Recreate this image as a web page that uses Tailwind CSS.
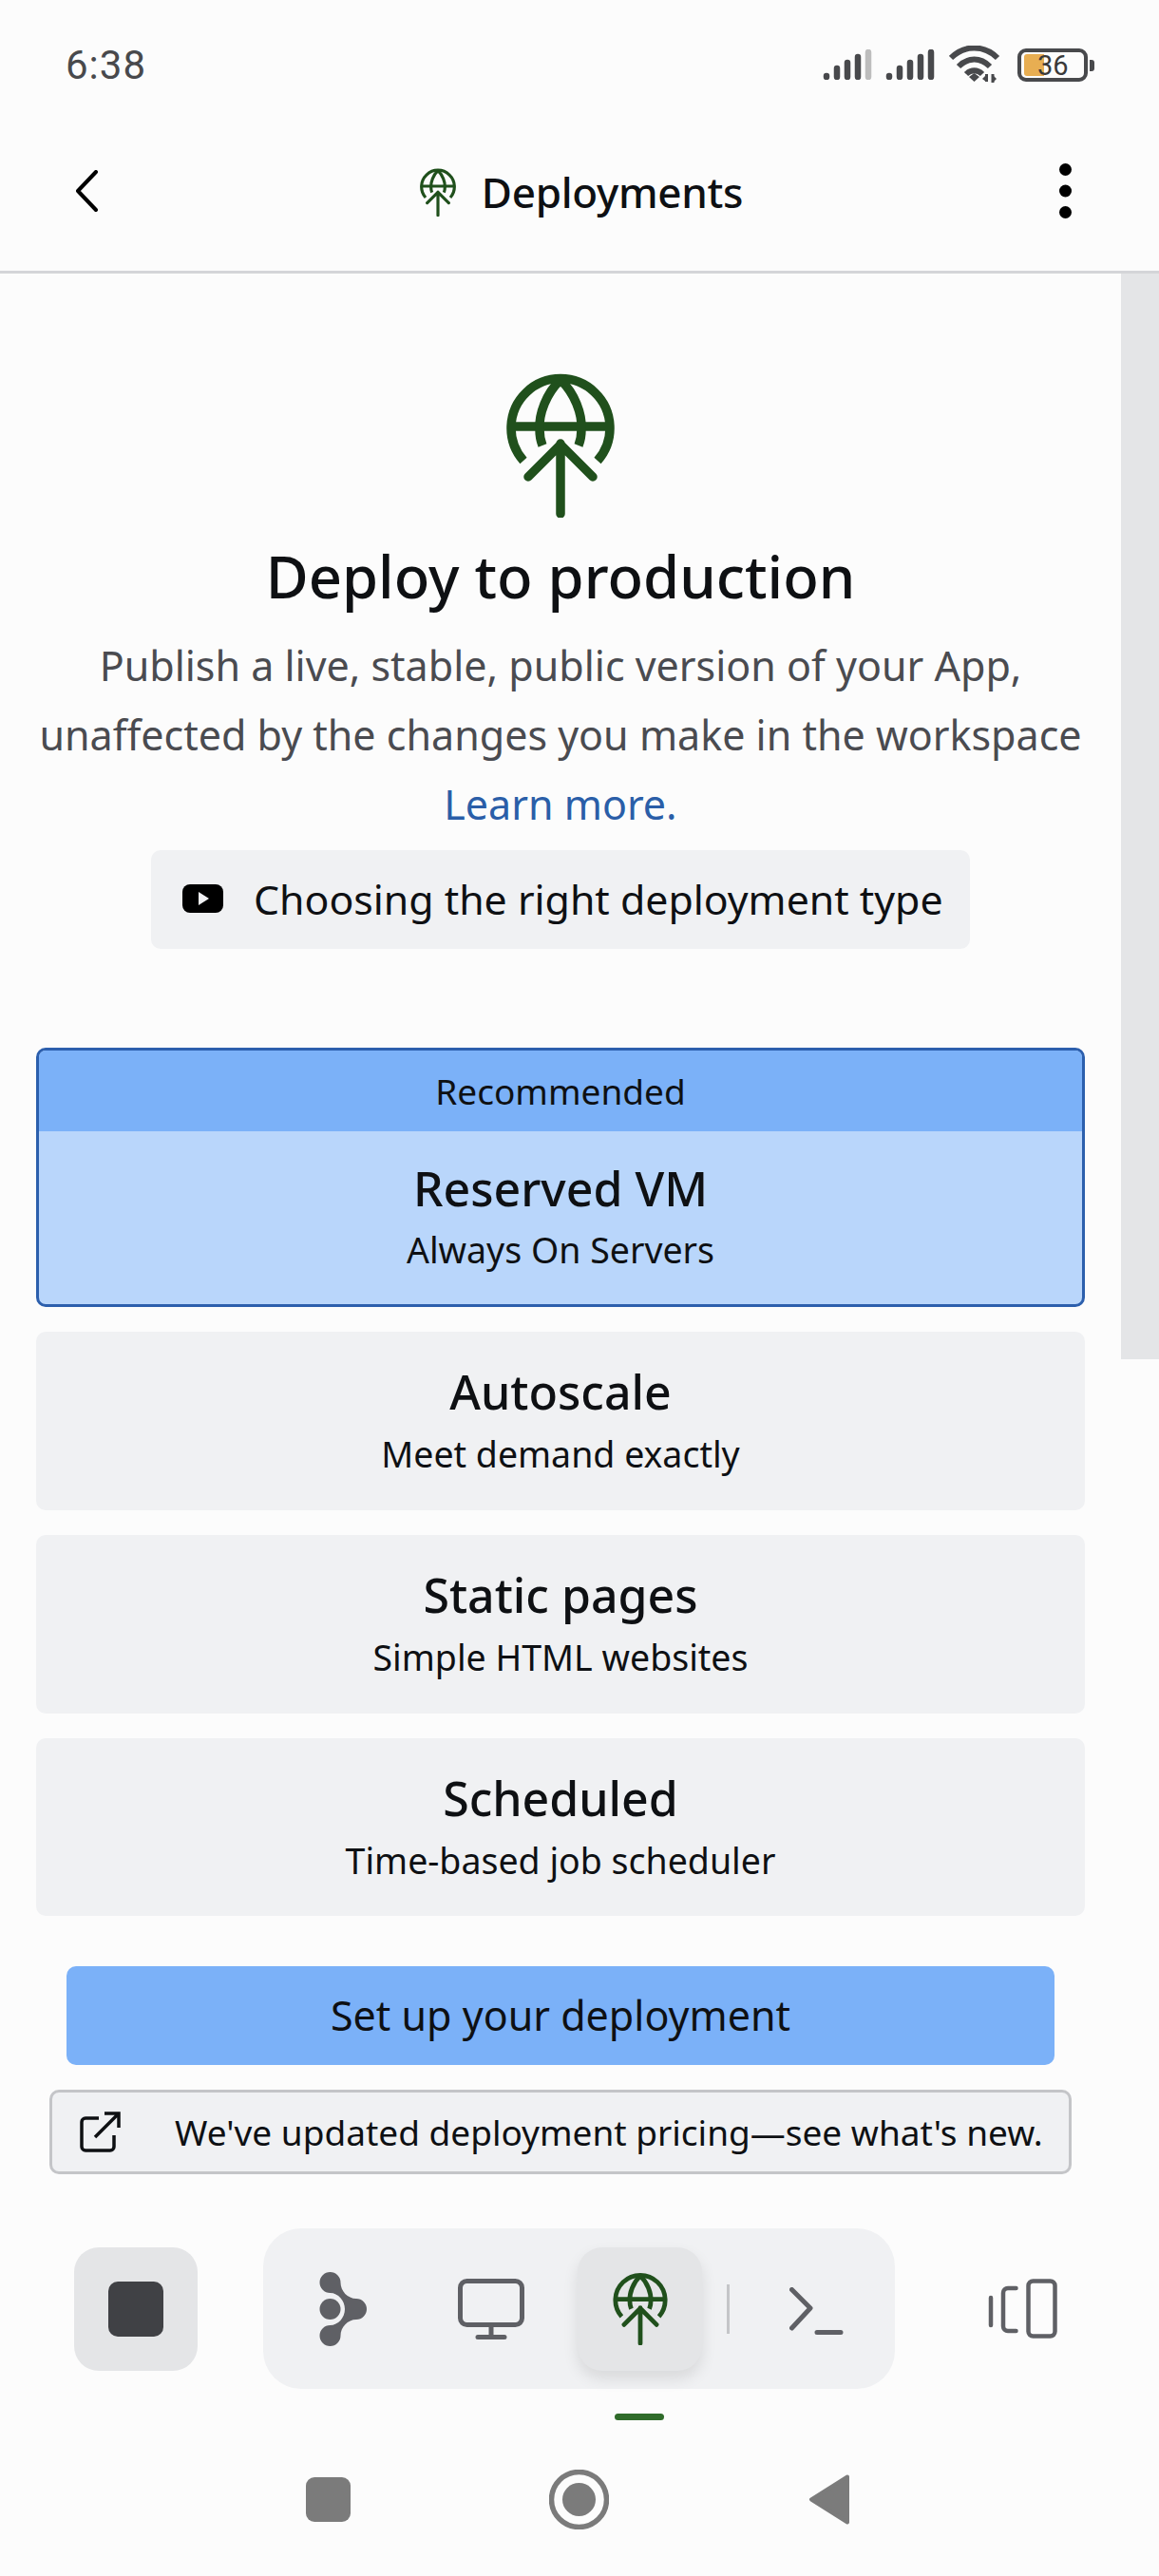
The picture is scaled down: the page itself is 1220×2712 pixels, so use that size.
<!doctype html>
<html lang="en">
  <head>
    <meta charset="UTF-8" />
    <meta name="viewport" content="width=device-width, initial-scale=1.0" />
    <title>Deployments</title>
    <script src="https://cdn.jsdelivr.net/npm/@tailwindcss/browser@4"></script>
  </head>
  <body class="relative h-[2712px] w-[1220px] overflow-hidden bg-[#fcfcfc] text-[#0e1013] [font-family:'Noto_Sans',sans-serif]">
    <!-- shared deploy glyph -->
    <svg class="hidden">
      <symbol id="deploy" viewBox="0 0 114 153">
        <g fill="none" stroke="currentColor" stroke-width="9.5">
          <path d="M18 93A52 52 0 1 1 96 93" />
          <path d="M5 57H109" />
          <path d="M57 8C42 22 34 44 35 60C35 66 36 72 38 77" />
          <path d="M57 8C72 22 80 44 79 60C79 66 78 72 76 77" />
          <path d="M57 75V149M23 110L57 76L91 110" stroke-linecap="round" stroke-linejoin="round" />
        </g>
      </symbol>
    </svg>

    <!-- status bar -->
    <div class="flex h-[136px] items-center justify-between pr-[68px] pl-[69px] text-[#48494c]">
      <span class="text-[42px] tracking-[1px] [font-family:Roboto,sans-serif]">6:38</span>
      <div class="flex items-center">
        <svg width="52" height="32" viewBox="0 0 52 32">
          <g fill="none" stroke-width="6.5" stroke-linecap="round">
            <path d="M4 29V28M15 29V20M26 29V14M37 29V8" stroke="#48494c" />
            <path d="M48 29V3" stroke="#bdbdbd" />
          </g>
        </svg>
        <svg width="52" height="32" viewBox="0 0 52 32" class="ml-[14px]">
          <path d="M4 29V28M15 29V20M26 29V14M37 29V8M48 29V3" fill="none" stroke="#48494c" stroke-width="6.500" stroke-linecap="round" />
        </svg>
        <svg width="54" height="40" viewBox="0 0 54 40" class="ml-[15px]">
          <g fill="none" stroke="#48494c" stroke-width="6">
            <path d="M2 13C16 -1 37 -1 51 13" />
            <path d="M10 22C20 12 33 12 43 22" />
            <path d="M18 30C23 25 30 25 35 30" />
          </g>
          <path d="M21 33L26.500 29L32 33L26.500 38Z" fill="#48494c" />
          <path d="M39 38V31L35 35ZM46 31V39L50 35Z" fill="#48494c" />
          <path d="M39.500 30V38M46 30V39" stroke="#48494c" stroke-width="3" />
        </svg>
        <div class="relative ml-[18px] flex h-[35px] w-[74px] items-center rounded-[9px] border-[4px] border-[#48494c]">
          <div class="ml-[3px] h-[23px] w-[21px] rounded-l-[3px] bg-[#e8ae52]"></div>
          <span class="absolute top-[-2px] left-[17px] text-[29px] leading-[32px] text-[#3a3a3a] [font-family:Roboto,sans-serif]">36</span>
          <div class="absolute top-[8px] right-[-11px] h-[12px] w-[5px] rounded-r-[3px] bg-[#48494c]"></div>
        </div>
        <div class="w-[7px]"></div>
      </div>
    </div>

    <!-- header -->
    <header class="flex h-[152px] items-center justify-between border-b-[3px] border-[#d4d5d8] pr-[92px] pl-[79px]">
      <svg width="24" height="44" viewBox="0 0 24 44" class="mt-[-19px]">
        <path d="M22 2L3 22L22 42" fill="none" stroke="#000" stroke-width="4" stroke-linecap="round" stroke-linejoin="round" />
      </svg>
      <div class="mt-[-17px] ml-[6px] flex items-center gap-[27px]">
        <svg class="h-[51px] w-[38px] text-[#20501c]"><use href="#deploy" /></svg>
        <span class="text-[44px] leading-[60px] font-medium tracking-[-0.3px]">Deployments</span>
      </div>
      <svg width="13" height="58" viewBox="0 0 13 58" class="mt-[-19px]">
        <circle cx="6.500" cy="6.500" r="6.500" /><circle cx="6.500" cy="29" r="6.500" /><circle cx="6.500" cy="51.500" r="6.500" />
      </svg>
    </header>

    <!-- scrollbar track -->
    <div class="absolute top-[288px] right-0 h-[1143px] w-[40px] bg-[#e4e5e7]"></div>

    <!-- main -->
    <main class="flex w-[1180px] flex-col items-center pt-[104px]">
      <svg class="h-[153px] w-[114px] text-[#20501c]"><use href="#deploy" /></svg>
      <h1 class="mt-[21px] text-[61.500px] leading-[80px] font-medium">Deploy to production</h1>
      <p class="mt-[18px] text-center text-[43px] leading-[73px] text-[#4a4b50]">
        Publish a live, stable, public version of your App,<br />
        unaffected by the changes you make in the workspace<br />
        <span class="text-[#2a5ea8]">Learn more.</span>
      </p>
      <div class="mt-[12px] flex h-[104px] w-[862px] items-center gap-[32px] rounded-[10px] bg-[#f0f1f3] pl-[33px]">
        <svg width="43" height="30" viewBox="0 0 43 30" class="mt-[-2px]">
          <rect width="43" height="30" rx="8" fill="#000" />
          <path d="M17 8L28 15L17 22Z" fill="#f0f1f3" />
        </svg>
        <span class="text-[42.800px] leading-[60px]">Choosing the right deployment type</span>
      </div>

      <div class="mt-[104px] flex w-[1104px] flex-col gap-[26px]">
        <div class="overflow-hidden rounded-[10px] border-[3px] border-[#2c5fad] bg-[#b9d6fb] text-center">
          <div class="flex h-[85px] items-center justify-center bg-[#7bb1f8] text-[37px]">Recommended</div>
          <div class="flex h-[182px] flex-col items-center pt-[28px]">
            <div class="text-[50px] leading-[64px] font-medium">Reserved VM</div>
            <div class="mt-[7px] text-[37.500px] leading-[52px]">Always On Servers</div>
          </div>
        </div>
        <div class="flex h-[188px] flex-col items-center rounded-[10px] bg-[#f0f1f3] pt-[31px]">
          <div class="text-[50px] leading-[64px] font-medium">Autoscale</div>
          <div class="mt-[8px] text-[37.500px] leading-[52px]">Meet demand exactly</div>
        </div>
        <div class="flex h-[188px] flex-col items-center rounded-[10px] bg-[#f0f1f3] pt-[31px]">
          <div class="text-[50px] leading-[64px] font-medium">Static pages</div>
          <div class="mt-[8px] text-[37.500px] leading-[52px]">Simple HTML websites</div>
        </div>
        <div class="flex h-[187px] flex-col items-center rounded-[10px] bg-[#f0f1f3] pt-[31px]">
          <div class="text-[50px] leading-[64px] font-medium">Scheduled</div>
          <div class="mt-[8px] text-[37.500px] leading-[52px]">Time-based job scheduler</div>
        </div>
      </div>

      <button class="mt-[53px] flex h-[104px] w-[1040px] items-center justify-center rounded-[10px] bg-[#7bb1f8] text-[43px]">Set up your deployment</button>
      <div class="mt-[26px] flex h-[89px] w-[1076px] items-center rounded-[10px] border-[3px] border-[#c4c5c8] bg-[#f0f1f3] pl-[29px]">
        <svg width="43" height="43" viewBox="0 0 43 43">
          <path d="M20 7H6a4 4 0 0 0 -4 4V37a4 4 0 0 0 4 4H32a4 4 0 0 0 4 -4V25M16 27L41 2M26 2H41V17" fill="none" stroke="#0e1013" stroke-width="3.500" />
        </svg>
        <span class="ml-[57px] text-[37px] whitespace-nowrap">We've updated deployment pricing—see what's new.</span>
      </div>
    </main>

    <!-- bottom tabs -->
    <div class="mt-[57px] flex h-[169px] items-center pl-[78px]">
      <div class="flex h-[130px] w-[130px] items-center justify-center rounded-[26px] bg-[#e4e5e7]">
        <div class="h-[58px] w-[58px] rounded-[10px] bg-[#404145]"></div>
      </div>
      <div class="ml-[69px] flex h-[169px] w-[665px] items-center rounded-[40px] bg-[#f0f1f3] pl-[59px]">
        <svg width="50" height="78" viewBox="0 0 50 78" fill="#5f6065">
          <path d="M11.500 0A11 11 0 0 1 22.500 11C22.500 20 30 28 39 28A11 11 0 0 1 39 50C30 50 22.500 58 22.500 67A11 11 0 0 1 .500 67A11 11 0 0 1 11.500 56C20 56 27 48 27 39C27 30 20 22 11.500 22A11 11 0 0 1 11.500 0Z" />
          <circle cx="11.500" cy="39" r="11" />
        </svg>
        <svg width="70" height="64" viewBox="0 0 70 64" class="ml-[96px]" fill="none" stroke="#5f6065" stroke-width="5" stroke-linecap="round">
          <rect x="2.500" y="2.500" width="65" height="46" rx="7" />
          <path d="M35 49V61M21 61.500H49" />
        </svg>
        <div class="ml-[56px] flex h-[130px] w-[131px] items-center justify-center rounded-[26px] bg-[#e4e5e7] shadow-[0_8px_16px_rgba(0,0,0,0.1)]">
          <svg class="h-[77px] w-[58px] text-[#20501c]"><use href="#deploy" /></svg>
        </div>
        <div class="ml-[26px] h-[52px] w-[3px] bg-[#c4c5c8]"></div>
        <svg width="58" height="50" viewBox="0 0 58 50" class="mt-[4px] ml-[63px]" fill="none" stroke="#5f6065" stroke-width="5" stroke-linecap="round" stroke-linejoin="round">
          <path d="M2.500 2.500L22 22L2.500 43M29 47.500H54" />
        </svg>
      </div>
      <svg width="73" height="63" viewBox="0 0 73 63" class="ml-[98px]" fill="none" stroke="#5f6065" stroke-width="4.500" stroke-linecap="round">
        <rect x="42.500" y="2.500" width="28" height="58" rx="5" />
        <path d="M29.500 10H21a5 5 0 0 0 -5 5V50a5 5 0 0 0 5 5H29.500M3 20V49" />
      </svg>
    </div>

    <!-- android nav -->
    <div class="mt-[26px] ml-[647px] h-[7px] w-[52px] rounded-full bg-[#2f6b2a]"></div>
    <div class="mt-[52px] flex h-[63px] items-center pl-[322px]">
      <div class="h-[47px] w-[47px] rounded-[9px] bg-[#7b7b7b]"></div>
      <svg width="63" height="63" viewBox="0 0 63 63" class="ml-[209px]">
        <circle cx="31.500" cy="31.500" r="29" fill="none" stroke="#7b7b7b" stroke-width="5.500" />
        <circle cx="31.500" cy="31.500" r="17.500" fill="#7b7b7b" />
      </svg>
      <svg width="44" height="53" viewBox="0 0 44 53" class="ml-[210px]">
        <path d="M41 2.500L3 26.500L41 50.500Z" fill="#7b7b7b" stroke="#7b7b7b" stroke-width="4" stroke-linejoin="round" />
      </svg>
    </div>
  </body>
</html>
